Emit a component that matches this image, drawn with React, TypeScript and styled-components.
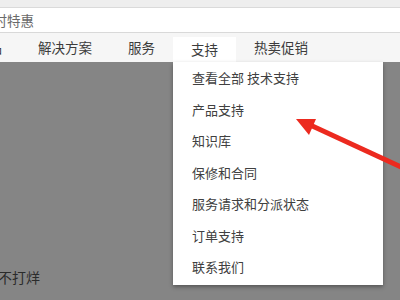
import * as React from 'react'
import styled, { createGlobalStyle } from 'styled-components'

const GlobalStyle = createGlobalStyle`
  html, body {
    margin: 0;
    padding: 0;
    width: 400px;
    height: 300px;
    overflow: hidden;
    background: #ffffff;
    font-family: "Noto Sans CJK SC", "Noto Sans", sans-serif;
  }
`

const menuItems = [
  '查看全部 技术支持',
  '产品支持',
  '知识库',
  '保修和合同',
  '服务请求和分派状态',
  '订单支持',
  '联系我们'
]

const navItems = ['产品', '解决方案', '服务', '支持', '热卖促销']

const S = {
  Page: styled.div`
    position: relative;
    display: flex;
    flex-direction: column;
    width: 400px;
    height: 300px;
    overflow: hidden;
  `,
  TopStrip: styled.div`
    height: 7px;
    background: #eeeeee;
    border-bottom: 1px solid #dadada;
  `,
  PromoBar: styled.div`
    height: 24px;
    display: flex;
    align-items: center;
    background: #ffffff;
    border-bottom: 1px solid #d9d9d9;
    font-size: 13.5px;
    color: #6a6a6a;
    span {
      margin-left: -20px;
      white-space: nowrap;
    }
  `,
  Nav: styled.nav`
    position: relative;
    z-index: 2;
    display: flex;
    height: 29px;
    background: #f6f6f6;
    margin-left: -43px;
  `,
  NavItem: styled.div<{ $active?: boolean }>`
    position: relative;
    display: flex;
    align-items: center;
    padding: 0 18px;
    margin-top: ${p => (p.$active ? '4px' : '0')};
    padding-bottom: ${p => (p.$active ? '0' : '4px')};
    padding-top: ${p => (p.$active ? '0' : '4px')};
    background: ${p => (p.$active ? '#ffffff' : 'transparent')};
    font-size: 13.5px;
    color: #3c3c3c;
    white-space: nowrap;
    line-height: 1;
  `,
  Dropdown: styled.ul`
    position: absolute;
    top: 100%;
    left: 0;
    width: 210px;
    margin: 0;
    padding: 0 0 2px;
    list-style: none;
    background: #ffffff;
    box-shadow: 0 2px 4px rgba(0, 0, 0, 0.35);
  `,
  MenuItem: styled.li`
    height: 31.5px;
    display: flex;
    align-items: center;
    padding-left: 19px;
    font-size: 13px;
    color: #404040;
    white-space: nowrap;
  `,
  Body: styled.div`
    flex: 1;
    display: flex;
    align-items: flex-end;
    background: #858585;
    padding-bottom: 13px;
  `,
  BodyText: styled.span`
    margin-left: -30px;
    font-size: 14px;
    line-height: 20px;
    color: #2b2b2b;
    white-space: nowrap;
  `,
  Arrow: styled.svg`
    position: absolute;
    left: 0;
    top: 0;
    z-index: 3;
    pointer-events: none;
  `
}

export default function App() {
  return (
    <S.Page>
      <GlobalStyle />
      <S.TopStrip />
      <S.PromoBar>
        <span>限时特惠</span>
      </S.PromoBar>
      <S.Nav>
        {navItems.map(label => (
          <S.NavItem key={label} $active={label === '支持'}>
            {label}
            {label === '支持' && (
              <S.Dropdown>
                {menuItems.map(item => (
                  <S.MenuItem key={item}>{item}</S.MenuItem>
                ))}
              </S.Dropdown>
            )}
          </S.NavItem>
        ))}
      </S.Nav>
      <S.Body>
        <S.BodyText>全天不打烊</S.BodyText>
      </S.Body>
      <S.Arrow width="400" height="300" viewBox="0 0 400 300">
        <line x1="308" y1="124" x2="410" y2="171" stroke="#ec2a1f" strokeWidth="5" />
        <polygon points="296,119 316,119 309,135" fill="#ec2a1f" />
      </S.Arrow>
    </S.Page>
  )
}
